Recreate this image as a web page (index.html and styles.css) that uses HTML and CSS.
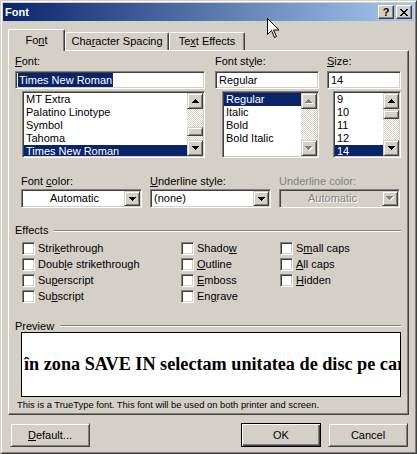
FILE: index.html
```html
<!DOCTYPE html>
<html lang="en">
<head>
    <meta charset="UTF-8">
    <meta name="viewport" content="width=device-width, initial-scale=1.0">
    <title>Font</title>
    <link rel="stylesheet" href="styles.css">
</head>
<body>
    <div class="window">
        <div class="titlebar">
            <span class="title">Font</span>
            <div class="caption">
                <span class="cap-btn">?</span>
                <span class="cap-btn">
                    <svg width="8" height="7" viewBox="0 0 8 7"><path d="M0 0h2v1h1v1h2V1h1V0h2v1H7v1H6v1H5v1h1v1h1v1h1v1H6V6H5V5H3v1H2v1H0V6h1V5h1V4h1V3H2V2H1V1H0z" fill="#000"/></svg>
                </span>
            </div>
        </div>

        <div class="content">
            <div class="tabs">
                <div class="tab active">Fo<u>n</u>t</div>
                <div class="tab t2">Cha<u>r</u>acter Spacing</div>
                <div class="tab t3">Te<u>x</u>t Effects</div>
            </div>

            <div class="panel">
                <div class="fields">
                    <div class="col col-font">
                        <label><u>F</u>ont:</label>
                        <div class="edit"><span class="sel">Times New Roman</span></div>
                        <div class="list">
                            <ul>
                                <li>MT Extra</li>
                                <li>Palatino Linotype</li>
                                <li>Symbol</li>
                                <li>Tahoma</li>
                                <li class="on">Times New Roman</li>
                            </ul>
                            <div class="vscroll">
                                <span class="sb-btn"><svg width="7" height="4" viewBox="0 0 7 4"><path d="M3 0h1v1h1v1h1v1h1v1H0V3h1V2h1V1h1z"/></svg></span>
                                <span class="sb-track"><span class="sb-thumb low"></span></span>
                                <span class="sb-btn"><svg width="7" height="4" viewBox="0 0 7 4"><path d="M0 0h7v1H6v1H5v1H4v1H3V3H2V2H1V1H0z"/></svg></span>
                            </div>
                        </div>
                    </div>

                    <div class="col col-style">
                        <label>Font st<u>y</u>le:</label>
                        <div class="edit">Regular</div>
                        <div class="list">
                            <ul>
                                <li class="on">Regular</li>
                                <li>Italic</li>
                                <li>Bold</li>
                                <li>Bold Italic</li>
                            </ul>
                            <div class="vscroll off">
                                <span class="sb-btn"><svg width="8" height="5" viewBox="0 0 8 5"><path fill="#fff" d="M4 1h1v1h1v1h1v1h1v1H1V4h1V3h1V2h1z"/><path fill="#808080" d="M3 0h1v1h1v1h1v1h1v1H0V3h1V2h1V1h1z"/></svg></span>
                                <span class="sb-track"></span>
                                <span class="sb-btn"><svg width="8" height="5" viewBox="0 0 8 5"><path fill="#fff" d="M1 1h7v1H7v1H6v1H5v1H4V4H3V3H2V2H1z"/><path fill="#808080" d="M0 0h7v1H6v1H5v1H4v1H3V3H2V2H1V1H0z"/></svg></span>
                            </div>
                        </div>
                    </div>

                    <div class="col col-size">
                        <label><u>S</u>ize:</label>
                        <div class="edit">14</div>
                        <div class="list">
                            <ul>
                                <li>9</li>
                                <li>10</li>
                                <li>11</li>
                                <li>12</li>
                                <li class="on">14</li>
                            </ul>
                            <div class="vscroll">
                                <span class="sb-btn"><svg width="7" height="4" viewBox="0 0 7 4"><path d="M3 0h1v1h1v1h1v1h1v1H0V3h1V2h1V1h1z"/></svg></span>
                                <span class="sb-track"><span class="sb-thumb high"></span></span>
                                <span class="sb-btn"><svg width="7" height="4" viewBox="0 0 7 4"><path d="M0 0h7v1H6v1H5v1H4v1H3V3H2V2H1V1H0z"/></svg></span>
                            </div>
                        </div>
                    </div>
                </div>

                <div class="combos">
                    <div class="cfield">
                        <label>Font <u>c</u>olor:</label>
                        <div class="combo">
                            <span class="combo-val center">Automatic</span>
                            <span class="drop"><svg width="7" height="4" viewBox="0 0 7 4"><path d="M0 0h7v1H6v1H5v1H4v1H3V3H2V2H1V1H0z"/></svg></span>
                        </div>
                    </div>
                    <div class="cfield">
                        <label><u>U</u>nderline style:</label>
                        <div class="combo">
                            <span class="combo-val">(none)</span>
                            <span class="drop"><svg width="7" height="4" viewBox="0 0 7 4"><path d="M0 0h7v1H6v1H5v1H4v1H3V3H2V2H1V1H0z"/></svg></span>
                        </div>
                    </div>
                    <div class="cfield disabled">
                        <label>Underline color:</label>
                        <div class="combo">
                            <span class="combo-val center">Automatic</span>
                            <span class="drop"><svg width="8" height="5" viewBox="0 0 8 5"><path fill="#fff" d="M1 1h7v1H7v1H6v1H5v1H4V4H3V3H2V2H1z"/><path fill="#808080" d="M0 0h7v1H6v1H5v1H4v1H3V3H2V2H1V1H0z"/></svg></span>
                        </div>
                    </div>
                </div>

                <div class="group effects">
                    <div class="group-head">Effects</div>
                    <div class="checks">
                        <div class="chk"><span class="box"></span>Stri<u>k</u>ethrough</div>
                        <div class="chk"><span class="box"></span>Doub<u>l</u>e strikethrough</div>
                        <div class="chk"><span class="box"></span>Su<u>p</u>erscript</div>
                        <div class="chk"><span class="box"></span>Su<u>b</u>script</div>
                        <div class="chk"><span class="box"></span>Shado<u>w</u></div>
                        <div class="chk"><span class="box"></span><u>O</u>utline</div>
                        <div class="chk"><span class="box"></span><u>E</u>mboss</div>
                        <div class="chk"><span class="box"></span>En<u>g</u>rave</div>
                        <div class="chk"><span class="box"></span>S<u>m</u>all caps</div>
                        <div class="chk"><span class="box"></span><u>A</u>ll caps</div>
                        <div class="chk"><span class="box"></span><u>H</u>idden</div>
                    </div>
                </div>

                <div class="group preview-group">
                    <div class="group-head">Preview</div>
                    <div class="preview"><span>în zona SAVE IN selectam unitatea de disc pe care</span></div>
                    <p class="note">This is a TrueType font. This font will be used on both printer and screen.</p>
                </div>
            </div>

            <div class="buttons">
                <span class="btn"><u>D</u>efault...</span>
                <span class="btn ok">OK</span>
                <span class="btn cancel">Cancel</span>
            </div>
        </div>

        <svg class="pointer" width="12" height="20" viewBox="0 0 12 20"><path d="M0.5 0.5v16l4-4 3 7 2-1-3-6.5h5.5z" fill="#fff" stroke="#000" stroke-width="1" stroke-linejoin="miter"/></svg>
    </div>
</body>
</html>
```

FILE: styles.css
```css
*{
    margin: 0;
    padding: 0;
    box-sizing: border-box;
    list-style: none;
}
body{
    font-family: "Liberation Sans", Arial, sans-serif;
    font-size: 11px;
    color: #000;
    background: #d4d0c8;
}
u{
    text-decoration: underline;
    text-underline-offset: 1px;
}
.window{
    width: 417px;
    height: 454px;
    background: #d4d0c8;
    border: 1px solid;
    border-color: #d4d0c8 #404040 #404040 #d4d0c8;
    box-shadow: inset 1px 1px #fff, inset -1px -1px #808080;
    padding: 2px;
    position: relative;
}

/* title bar */
.titlebar{
    height: 18px;
    background: linear-gradient(to right, #0a246a, #a6caf0);
    display: flex;
    align-items: center;
    justify-content: space-between;
    padding: 0 2px 0 2px;
    color: #fff;
    font-weight: bold;
}
.caption{
    display: flex;
    gap: 2px;
}
.cap-btn{
    width: 16px;
    height: 14px;
    display: flex;
    align-items: center;
    justify-content: center;
    background: #d4d0c8;
    color: #000;
    font-size: 11px;
    font-weight: bold;
    border: 1px solid;
    border-color: #fff #404040 #404040 #fff;
    box-shadow: inset -1px -1px #808080;
}

.content{
    padding: 8px 5px 0 5px;
}

/* tabs */
.tabs{
    display: flex;
    align-items: flex-end;
}
.tab{
    height: 18px;
    line-height: 16px;
    text-align: center;
    border: 1px solid;
    border-bottom: none;
    border-color: #fff #404040 #404040 #fff;
    box-shadow: inset -1px 0 #808080;
    border-radius: 2px 2px 0 0;
}
.tab.active{
    width: 57px;
    height: 22px;
    line-height: 18px;
    padding-top: 1px;
    margin-bottom: -1px;
    position: relative;
    z-index: 1;
    background: #d4d0c8;
}
.t2{
    width: 104px;
}
.t3{
    width: 76px;
}

/* panel */
.panel{
    height: 365px;
    border: 1px solid;
    border-color: #fff #404040 #404040 #fff;
    box-shadow: inset -1px -1px #808080;
    padding: 4px 7px 0 6px;
}
.fields{
    display: flex;
}
.col-font{
    width: 190px;
}
.col-style{
    width: 104px;
    margin-left: 10px;
}
.col-size{
    width: 74px;
    margin-left: 8px;
}
label{
    display: block;
    height: 13px;
    line-height: 13px;
    white-space: nowrap;
}
.fields label{
    margin-bottom: 3px;
}
.edit, .list, .combo, .box{
    border: 1px solid;
    border-color: #808080 #fff #fff #808080;
    box-shadow: inset 1px 1px #404040, inset -1px -1px #d4d0c8;
}
.edit{
    height: 18px;
    background: #fff;
    padding: 1px 3px;
    line-height: 14px;
    white-space: nowrap;
}
.edit .sel{
    display: inline-block;
    background: #0a246a;
    color: #fff;
    margin-left: -1px;
    padding: 0 1px;
    line-height: 14px;
}
.list{
    display: flex;
    height: 67px;
    margin-top: 2px;
    margin-left: 7px;
    background: #fff;
    padding: 1px;
    overflow: hidden;
}
.col-size .list{
    margin-left: 6px;
}
.list ul{
    flex: 1;
    overflow: hidden;
}
.list li{
    line-height: 13px;
    height: 13px;
    padding-left: 2px;
    white-space: nowrap;
}
.list li.on{
    background: #0a246a;
    color: #fff;
}

/* scroll bars */
.vscroll{
    width: 16px;
    display: flex;
    flex-direction: column;
}
.sb-btn, .drop, .sb-thumb, .btn{
    border: 1px solid;
    border-color: #d4d0c8 #404040 #404040 #d4d0c8;
    box-shadow: inset 1px 1px #fff, inset -1px -1px #808080;
    background: #d4d0c8;
}
.sb-btn{
    height: 16px;
    display: flex;
    align-items: center;
    justify-content: center;
}
.sb-track{
    flex: 1;
    background: repeating-conic-gradient(#fff 0 25%, #d4d0c8 0 50%) 0 0 / 2px 2px;
}
.sb-thumb{
    display: block;
    height: 9px;
}
.sb-thumb.low{
    margin-top: 18px;
}
.sb-thumb.high{
    margin-top: 1px;
}

/* combo boxes */
.combos{
    display: flex;
    gap: 8px;
    margin: 17px 0 0 6px;
}
.cfield{
    width: 121px;
}
.cfield label{
    margin-bottom: 1px;
}
.combo{
    height: 19px;
    background: #fff;
    padding: 1px;
    display: flex;
}
.combo-val{
    flex: 1;
    line-height: 15px;
    padding-left: 2px;
}
.combo-val.center{
    text-align: center;
}
.drop{
    width: 16px;
    display: flex;
    align-items: center;
    justify-content: center;
}
.disabled label{
    color: #808080;
}
.disabled .combo{
    background: #d4d0c8;
}
.disabled .combo-val{
    color: #808080;
    text-shadow: 1px 1px #fff;
}

/* group boxes */
.effects{
    margin-top: 16px;
}
.group-head{
    display: flex;
    align-items: center;
    height: 13px;
    line-height: 13px;
}
.group-head::after{
    content: "";
    flex: 1;
    border-top: 1px solid #808080;
    border-bottom: 1px solid #fff;
    margin-left: 6px;
}
.checks{
    display: grid;
    grid-template-columns: 159px 99px 1fr;
    grid-template-rows: repeat(4, 16px);
    grid-auto-flow: column;
    margin: 3px 0 0 7px;
}
.chk{
    display: flex;
    align-items: center;
    white-space: nowrap;
}
.box{
    width: 13px;
    height: 13px;
    background: #fff;
    margin-right: 3px;
}
.preview-group{
    margin-top: 16px;
}
.preview-group .group-head{
    height: 12px;
    line-height: 12px;
}
.preview{
    height: 65px;
    margin-left: 6px;
    border: 1px solid #000;
    background: #fff;
    display: flex;
    align-items: center;
    overflow: hidden;
    padding-left: 2px;
    white-space: nowrap;
}
.preview span{
    font-family: "Liberation Serif", "Times New Roman", serif;
    font-weight: bold;
    font-size: 18.2px;
}
.note{
    margin: 2px 0 0 2px;
    font-size: 9.4px;
    line-height: 11px;
    white-space: nowrap;
}

/* buttons */
.buttons{
    display: flex;
    margin-top: 8px;
    padding: 0 1px 0 2px;
}
.btn{
    width: 80px;
    height: 24px;
    display: flex;
    align-items: center;
    justify-content: center;
}
.btn.ok{
    margin-left: auto;
    border-color: #000;
    box-shadow: inset 1px 1px #fff, inset -1px -1px #404040, inset -2px -2px #808080;
}
.btn.cancel{
    margin-left: 7px;
}

.pointer{
    position: absolute;
    left: 266px;
    top: 17px;
    z-index: 5;
}
```
